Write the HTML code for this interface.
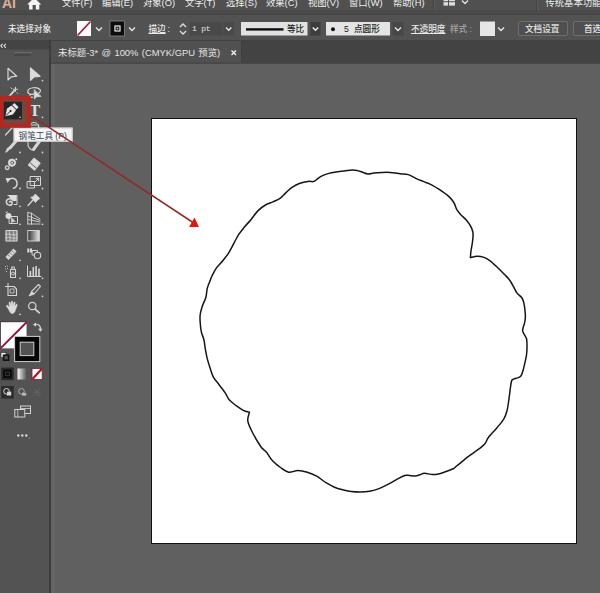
<!DOCTYPE html>
<html><head><meta charset="utf-8"><title>Illustrator</title>
<style>
html,body{margin:0;padding:0;background:#606060;}
body{width:600px;height:593px;overflow:hidden;position:relative;font-family:"Liberation Sans","Noto Sans CJK SC",sans-serif;color:#dcdcdc;}
.abs{position:absolute;}
#menubar{left:0;top:0;width:600px;height:15px;background:linear-gradient(#505050 0,#505050 10px,#4a4a4a 10px,#4a4a4a 14px,#434343 14px,#434343 15px);overflow:hidden;}
#menubar span{position:absolute;top:-4.1px;font-size:9.3px;line-height:14px;color:#efefef;white-space:nowrap;}
#ctrl{left:0;top:15px;width:600px;height:25px;background:#525252;border-bottom:1px solid #424242;}
#ctrltxt{left:0;top:14px;width:600px;height:26px;}
#ctrltxt .t{position:absolute;font-size:8.6px;line-height:12px;top:9px;color:#e8e8e8;white-space:nowrap;font-weight:500;}
#tabbar{left:0;top:41px;width:600px;height:22px;background:#434343;border-bottom:1px solid #494949;}
#tab{left:51px;top:41px;width:190px;height:22px;background:#515151;border-right:1px solid #3e3e3e;border-bottom:1px solid #4a4a4a;box-sizing:content-box;height:21px;}
#tab span{position:absolute;left:7px;top:4.7px;font-size:9.4px;word-spacing:0.8px;line-height:13px;color:#e4e4e4;white-space:nowrap;}
#canvas{left:51px;top:64px;width:549px;height:530px;background:#606060;}
#tools{left:0;top:41px;width:49px;height:552px;background:#535353;}
#toolsedge{left:49px;top:41px;width:2px;height:552px;background:#3c3c3c;}
#strip{left:51px;top:64px;width:4px;height:529px;background:#656565;}
#toolshead{left:0;top:41px;width:49px;height:8px;background:#444444;border-bottom:1px solid #4b4b4b;}
#art{left:151px;top:118px;width:424px;height:424px;background:#fff;border:1px solid #111;}
#ttool{left:29.3px;top:102px;font-family:"Liberation Serif",serif;font-weight:bold;font-size:16.5px;line-height:18px;color:#dedede;}
#tip{left:13px;top:127px;transform:translate(0.6px,0.6px);width:59px;height:14px;background:#f6f6f6;border:1px solid #cfcfcf;box-sizing:border-box;}
#tip span{position:absolute;left:4px;top:1.5px;font-size:8.6px;line-height:11px;color:#3b4658;white-space:nowrap;}
</style></head><body>
<div class="abs" id="menubar">
<span style="left:2px;font-weight:bold;font-size:14px;color:#dcb09a;top:-4.3px;font-family:'Liberation Sans',sans-serif;letter-spacing:0">AI</span>
<span style="left:62px">文件(F)</span><span style="left:102px">编辑(E)</span><span style="left:143px">对象(O)</span><span style="left:185px">文字(T)</span><span style="left:226px">选择(S)</span><span style="left:266px">效果(C)</span><span style="left:308px">视图(V)</span><span style="left:349px">窗口(W)</span><span style="left:393px">帮助(H)</span>
<span style="left:545.5px;top:-4.2px">传统基本功能</span>
</div>
<div class="abs" id="ctrl"></div>
<div class="abs" id="tabbar"></div>
<div class="abs" id="tab"><span>未标题-3* @ 100% (CMYK/GPU 预览)</span></div>
<div class="abs" id="canvas"></div>
<div class="abs" id="tools"></div>
<div class="abs" id="toolshead"></div>
<div class="abs" id="toolsedge"></div>
<div class="abs" id="strip"></div>
<div class="abs" id="art"></div>
<svg class="abs" id="ov" style="left:0;top:0" width="600" height="593" viewBox="0 0 600 593">
<path d="M280.0 198.4C282.2 196.8 284.0 194.4 286.0 192.6C288.0 190.8 289.7 188.9 292.0 187.4C294.3 185.9 297.3 184.3 300.0 183.3C302.7 182.3 305.8 181.7 308.0 181.4C310.2 181.1 311.7 181.8 313.0 181.6C314.3 181.4 314.7 180.9 316.0 180.0C317.3 179.1 319.0 177.5 321.0 176.4C323.0 175.3 325.5 174.3 328.0 173.6C330.5 172.9 333.3 172.4 336.0 172.0C338.7 171.6 341.3 171.3 344.0 171.0C346.7 170.7 349.8 170.1 352.0 170.0C354.2 169.9 355.3 170.1 357.0 170.4C358.7 170.7 360.2 171.4 362.0 172.0C363.8 172.6 366.0 173.8 368.0 174.0C370.0 174.2 371.7 173.3 374.0 173.0C376.3 172.7 379.3 172.5 382.0 172.4C384.7 172.3 387.0 172.2 390.0 172.4C393.0 172.6 397.0 173.3 400.0 173.7C403.0 174.1 405.5 173.8 408.2 174.6C410.9 175.4 413.6 177.4 416.3 178.6C419.0 179.8 421.7 180.8 424.4 181.9C427.1 183.0 429.8 183.9 432.5 185.3C435.2 186.7 437.9 188.6 440.6 190.4C443.3 192.2 446.5 194.4 448.7 196.4C450.9 198.4 452.4 200.3 453.8 202.5C455.2 204.7 455.6 207.6 456.8 209.6C458.0 211.6 459.1 212.8 460.8 214.7C462.5 216.5 465.2 218.7 466.9 220.7C468.6 222.7 470.0 224.8 471.0 226.8C472.0 228.8 472.7 230.5 473.0 232.9C473.3 235.3 472.9 238.0 472.6 241.0C472.3 244.0 471.4 248.2 471.0 251.0C470.6 253.8 470.5 256.5 470.4 257.6C471.5 257.4 474.9 256.3 477.0 256.2C479.1 256.1 481.2 256.4 483.3 257.1C485.4 257.8 487.1 258.7 489.4 260.3C491.7 261.9 494.6 264.7 497.0 267.0C499.4 269.3 501.9 271.8 504.0 274.0C506.1 276.2 508.0 277.8 509.6 280.0C511.2 282.2 512.7 285.2 513.9 287.4C515.1 289.5 515.5 291.1 516.9 292.9C518.2 294.7 520.8 296.2 522.0 298.0C523.2 299.8 523.5 301.5 524.0 303.6C524.5 305.7 524.8 308.5 525.0 310.7C525.2 312.9 525.5 314.8 525.4 316.8C525.3 318.8 525.1 320.7 524.6 322.9C524.1 325.1 522.7 328.1 522.6 330.0C522.5 331.9 523.3 332.5 524.0 334.0C524.7 335.5 526.1 336.8 526.6 339.0C527.1 341.2 527.0 344.5 527.0 347.2C527.0 349.9 526.8 352.9 526.5 355.0C526.2 357.1 526.1 357.6 525.5 360.1C524.9 362.6 523.9 367.5 523.1 370.2C522.3 372.9 521.9 374.9 520.7 376.3C519.5 377.7 517.5 377.7 516.0 378.3C514.5 378.9 512.9 378.6 512.0 380.0C511.1 381.4 511.1 383.3 510.6 386.4C510.1 389.5 509.6 394.6 509.0 398.6C508.4 402.7 507.9 407.3 507.0 410.7C506.1 414.1 505.6 415.9 503.9 418.8C502.2 421.7 499.3 424.9 496.8 427.9C494.3 430.9 490.7 434.3 488.7 437.0C486.7 439.7 486.4 442.1 484.7 444.1C483.0 446.1 481.3 447.2 478.6 449.2C475.9 451.2 471.1 454.4 468.5 456.3C465.9 458.2 464.9 459.3 463.0 460.8C461.1 462.3 458.8 464.2 457.2 465.5C455.6 466.8 455.4 467.5 453.7 468.5C451.9 469.5 449.0 470.4 446.7 471.3C444.4 472.2 442.0 473.1 439.7 473.7C437.4 474.2 435.2 474.7 432.7 474.6C430.2 474.5 426.6 473.2 424.5 473.2C422.4 473.2 421.4 474.3 419.8 474.8C418.2 475.3 416.9 475.9 415.2 476.0C413.4 476.1 411.1 475.6 409.3 475.5C407.6 475.4 406.6 474.9 404.7 475.5C402.8 476.1 400.4 477.4 397.7 478.8C395.0 480.2 391.4 482.6 388.3 484.2C385.2 485.8 382.1 487.4 379.0 488.6C375.9 489.8 372.8 490.6 369.7 491.2C366.6 491.8 363.4 491.9 360.3 491.9C357.2 491.9 354.1 491.8 351.0 491.4C347.9 491.0 344.4 490.2 341.7 489.5C338.9 488.8 337.1 488.3 334.5 487.2C331.9 486.1 329.0 484.5 326.0 482.7C323.0 480.9 319.8 477.9 316.7 476.1C313.6 474.4 310.4 473.1 307.3 472.2C304.2 471.3 301.1 470.5 298.0 470.5C294.9 470.5 291.6 472.7 288.7 472.2C285.8 471.7 283.2 469.4 280.5 467.5C277.8 465.6 274.6 463.0 272.3 460.5C270.0 458.0 268.4 454.6 266.5 452.3C264.6 450.0 263.0 449.8 260.7 446.5C258.4 443.2 254.7 436.8 252.5 432.5C250.3 428.2 248.3 424.2 247.8 420.8C247.3 417.4 249.2 413.6 249.5 412.2C248.4 411.9 245.4 411.4 243.2 410.3C241.0 409.2 238.5 407.4 236.2 405.7C233.9 403.9 231.0 401.9 229.2 399.8C227.4 397.7 227.1 395.7 225.5 393.3C223.9 390.9 221.5 387.9 219.5 385.2C217.5 382.5 214.9 379.8 213.4 377.1C211.9 374.4 211.4 372.0 210.4 369.0C209.4 366.0 208.2 362.3 207.3 358.9C206.5 355.5 205.9 352.0 205.3 348.8C204.7 345.6 204.6 342.6 203.9 339.7C203.2 336.8 201.9 334.5 201.3 331.6C200.7 328.7 200.4 325.4 200.2 322.5C200.0 319.6 199.8 317.1 200.2 314.4C200.5 311.7 201.4 309.2 202.3 306.3C203.2 303.4 205.1 300.2 205.9 297.2C206.7 294.2 206.6 291.0 207.3 288.1C208.1 285.2 209.7 281.9 210.4 280.0C211.1 278.1 210.7 278.5 211.7 276.5C212.7 274.5 214.5 270.7 216.3 268.1C218.2 265.5 220.8 263.2 222.8 260.7C224.8 258.2 226.5 256.2 228.4 253.3C230.3 250.4 232.3 246.2 234.0 243.1C235.7 240.0 236.9 237.3 238.6 234.7C240.3 232.1 242.2 229.8 244.2 227.3C246.2 224.8 248.4 222.7 250.7 219.9C253.0 217.1 255.6 213.1 258.1 210.6C260.6 208.1 263.0 206.4 265.5 205.0C268.0 203.6 270.5 203.0 272.9 201.9C275.3 200.8 277.8 200.0 280.0 198.4Z" fill="none" stroke="#161616" stroke-width="1.5" stroke-linejoin="round"/>
<!-- menu bar icons -->
<g id="mb">
<path d="M27.2 4.4 L34.2 -2.2 L41.2 4.4 L39.3 4.4 L39.3 9.4 L35.8 9.4 L35.8 5 L32.6 5 L32.6 9.4 L29.1 9.4 L29.1 4.4Z" fill="#f4f4f4"/>
<rect x="433" y="0" width="1" height="10" fill="#424242"/><rect x="434" y="0" width="1" height="10" fill="#5c5c5c"/>
<rect x="536" y="0" width="1" height="10" fill="#424242"/><rect x="537" y="0" width="1" height="10" fill="#5c5c5c"/>
<g fill="#dedede"><rect x="443.5" y="-1" width="4.5" height="2.2"/><rect x="449" y="-1" width="6" height="2.2"/><rect x="443.5" y="2.2" width="4.5" height="3.4"/><rect x="449" y="2.2" width="6" height="3.4"/></g>
<path d="M462 0.5 l3 3 l3 -3" fill="none" stroke="#e6e6e6" stroke-width="1.3"/>
</g>
<!-- control bar widgets -->
<g id="cb">
<rect x="77" y="21" width="14" height="15" fill="#fbfbfb"/>
<path d="M77.5 35.5 L90.5 21.5" stroke="#982035" stroke-width="1.7"/>
<path d="M96 27.5 l3 3 l3 -3" fill="none" stroke="#e6e6e6" stroke-width="1.4"/>
<rect x="110" y="21" width="14.5" height="15" fill="#0c0c0c" stroke="#8a8a8a" stroke-width="0.8"/>
<rect x="115" y="26" width="5" height="5" fill="none" stroke="#f0f0f0" stroke-width="1.2"/>
<rect x="116.6" y="27.6" width="1.8" height="1.8" fill="#bbb"/>
<path d="M129 27.5 l3 3 l3 -3" fill="none" stroke="#e6e6e6" stroke-width="1.4"/>
<path d="M180 27 l3 -3 l3 3 M180 31 l3 3 l3 -3" fill="none" stroke="#e0e0e0" stroke-width="1.3"/>
<rect x="189.5" y="22" width="33" height="13.5" fill="#494949"/>
<rect x="223.5" y="22" width="10.5" height="13.5" fill="#494949"/><path d="M226 27.5 l2.7 2.7 l2.7 -2.7" fill="none" stroke="#e6e6e6" stroke-width="1.4"/>
<rect x="241" y="22" width="66.5" height="13.5" fill="#e2e2e2"/>
<rect x="246" y="28.2" width="37.5" height="2.4" fill="#111"/>
<rect x="310.5" y="22" width="10" height="13.5" fill="#3d3d3d"/>
<path d="M312.8 27.5 l2.7 2.7 l2.7 -2.7" fill="none" stroke="#f0f0f0" stroke-width="1.4"/>
<rect x="326" y="22" width="64" height="13.5" fill="#e4e4e4"/>
<circle cx="333" cy="29.3" r="2" fill="#111"/>
<rect x="392.5" y="22" width="11" height="13.5" fill="#474747"/><path d="M395 27.5 l3 3 l3 -3" fill="none" stroke="#e6e6e6" stroke-width="1.4"/>
<rect x="480" y="21.5" width="15" height="14.5" fill="#e6e6e6"/>
<path d="M498 27.5 l3 3 l3 -3" fill="none" stroke="#e6e6e6" stroke-width="1.4"/>
<rect x="518.5" y="21.5" width="49" height="14" rx="1.5" fill="#4f4f4f" stroke="#6e6e6e" stroke-width="1"/>
<rect x="573.5" y="21.5" width="40" height="14" rx="1.5" fill="#4f4f4f" stroke="#6e6e6e" stroke-width="1"/>
</g>
<!-- tab close -->
<path d="M231.5 50.5 l4.5 4.5 M236 50.5 l-4.5 4.5" stroke="#f0f0f0" stroke-width="1.4"/>
<!-- toolbar header -->
<path d="M2.6 43.8 l-1.8 2 l1.8 2 M5.8 43.8 l-1.8 2 l1.8 2" fill="none" stroke="#e0e0e0" stroke-width="1.1"/>
<rect x="14.5" y="52" width="17.5" height="1" fill="#686868"/><rect x="14" y="54.5" width="17" height="1" fill="#3c3c3c"/>
<!-- tool icons -->
<g id="tl" fill="none" stroke="#d6d6d6" stroke-width="1.2" stroke-linejoin="round" stroke-linecap="round">
<!-- row1 -->
<path d="M8 68.3 L8 80 L11.3 76.8 L16.8 76.2 Z"/>
<path d="M30.5 68 L30.5 80.3 L34 77 L40 76.3 Z" fill="#dcdcdc"/>
<!-- row2 wand -->
<g transform="translate(0 0.8)"><path d="M7.5 97.5 L14 90" stroke-width="1.8"/>
<path d="M15.5 86.5 v4 M13.5 88.5 h4 M11 87 l1 1 M17 92 l0.6 0.6" stroke-width="1"/></g>
<!-- lasso -->
<path d="M35.5 93.5 C30 95.5 27 93.5 28 90.5 C29 87.5 37 86.5 40 89.5 C41 91 40 92.5 38.5 93.3 M30.5 94.5 C29 96 30.5 98 32.5 97.2"/>
<path d="M34.3 90 L34.3 99 L36.6 96.8 L40.6 96.4 Z" fill="#dcdcdc" stroke-width="0.8"/>
<!-- T -->
<!-- row4 line + rect (mostly hidden) -->
<path d="M5.5 135 L17 122.5"/>
<path d="M29 127 a5 4.5 0 0 1 10 0 M27.5 125 h11 v10 h-11z" stroke-width="1"/>
<!-- row5 brush -->
<path d="M16.5 140.5 L10 148" stroke-width="3"/>
<path d="M9.5 148.5 C8.5 151 7 152 5.5 152.2 C7 150.5 6.5 148.5 8.2 147.4 Z" fill="#dcdcdc" stroke-width="0.8"/>
<!-- pencil/shaper -->
<path d="M40 140.5 L33.5 149.5" stroke-width="3"/>
<path d="M28 142 C27.5 146 29.5 149 32 150" stroke-width="1.1"/>
<!-- row6 blob brush-ish -->
<circle cx="12" cy="162.7" r="3.6" fill="#dcdcdc" stroke-width="1"/>
<circle cx="12.2" cy="162.7" r="1.5" fill="none" stroke="#535353" stroke-width="0.9"/>
<circle cx="7.2" cy="167.7" r="1.8" stroke-width="1.3"/>
<circle cx="16.3" cy="159.3" r="1" fill="#dcdcdc" stroke="none"/>
<!-- eraser -->
<path d="M34 158.3 L40 163.3 L34.5 170 L28.5 165 Z" fill="#dcdcdc"/>
<path d="M30.3 163 L36.2 168" stroke="#535353" stroke-width="0.9"/>
<!-- row7 rotate -->
<path d="M8 180.5 C11 176.5 17 178 17 183.5 C17 186 15.5 187.6 13.5 188.2" stroke-width="1.5"/>
<path d="M5.5 178 L10.5 178.2 L7.6 183 Z" fill="#dcdcdc" stroke="none"/>
<!-- scale -->
<rect x="27.5" y="181.5" width="7" height="6.5" stroke-width="1"/>
<rect x="30.5" y="176.5" width="10" height="9" stroke-width="1"/>
<path d="M34 183 L38.5 178.5 M36 178.3 h2.7 v2.7" stroke-width="1"/>
<!-- row8 width/warp -->
<path d="M8 195.5 h9 v9 h-3" stroke-width="1"/>
<path d="M8.5 196 h8 v5 h-4z" fill="#dcdcdc" stroke="none"/>
<path d="M11.5 199 C8 198 5.5 200.5 6.5 203 C7.5 206 11.5 206 12.2 203.2 C12.5 201.5 10.5 200.8 9.6 202" stroke-width="1.6"/>
<!-- pin -->
<path d="M28 205.5 L32.5 200.5" stroke-width="1.3"/>
<path d="M31 197.5 L35.5 202.5 L37 200.5 L39.8 198.5 L35.3 194 L33.3 196.6 Z" fill="#dcdcdc" stroke-width="0.8"/>
<!-- row9 shape builder -->
<rect x="9.5" y="216.5" width="8" height="7" stroke-width="1"/>
<circle cx="8.5" cy="216" r="3" fill="#dcdcdc" stroke="none"/>
<path d="M11.5 218 L11.5 223 L13 221.6 L15 221.4Z" fill="#dcdcdc" stroke-width="0.6"/>
<path d="M6 212.5 l1.5 -0.5" stroke-width="1"/>
<!-- perspective grid -->
<path d="M27.8 212.5 V224 M31.5 213.3 V224 M27.8 212.5 L31.5 213.3 M27.8 216 L40 220.5 M27.8 219.5 L40 222 M27.8 224 H40 M31.5 213.3 L40 219 M31.5 216.5 V224" stroke-width="0.9"/>
<!-- row10 mesh -->
<rect x="6" y="230.5" width="11" height="10.5" stroke-width="1.2" fill="#808080"/>
<path d="M6 234.5 C9 232.5 13 237 17 234 M6 238 C10 236 13 240 17 237.5 M9.5 230.5 C8.5 234 11.5 237 9.5 241 M13.5 230.5 C12.5 234 15.5 237 13.5 241" stroke-width="0.8"/>
<!-- eyedropper/measure (row 11) -->
<path d="M7 258.5 L15 250" stroke-width="4.2" stroke-linecap="butt"/>
<path d="M8.3 255 l1.4 1.4 M10.3 253 l1.4 1.4 M12.3 251 l1.4 1.4" stroke="#535353" stroke-width="0.8"/>
<!-- blend -->
<rect x="27.3" y="248.5" width="2" height="4" fill="#dcdcdc" stroke="none"/>
<rect x="30" y="248.5" width="2" height="4" fill="#dcdcdc" stroke="none"/>
<rect x="32.5" y="250.5" width="5" height="4.5" stroke-width="1"/>
<circle cx="37.5" cy="255.5" r="3.2" fill="#535353" stroke-width="1.1"/>
<!-- row 12 sprayer -->
<path d="M10.5 269.5 h5 v8 h-5z M11.8 269.5 v-2.5 h2.4 v2.5" stroke-width="1.1"/>
<circle cx="13" cy="273.5" r="1.5" stroke-width="1"/>
<path d="M5.5 266.5 v0.1 M7.5 266 v0.1 M5.5 269 v0.1 M7.5 268.5 v0.1 M6.5 271.5 v0.1" stroke-width="1"/>
<!-- graph -->
<path d="M27.5 266 V276.5 H41" stroke-width="1"/>
<path d="M30.4 271 V276 M33.3 267 V276 M36.1 266 V276 M39 268.6 V276" stroke-width="1.6" stroke-linecap="butt"/>
<!-- row 13 artboard -->
<path d="M8 283.5 V295.5 H16.5 V289 L14 286.5 H5.5 M8 286.5 V295.5" stroke-width="1.1"/>
<path d="M10.5 289 h3.5 v4 h-3.5z" stroke-width="0.8"/>
<!-- slice -->
<path d="M38.5 284.5 L40.5 286.5 L34 294 L31.5 291.5 Z" stroke-width="1.1"/>
<path d="M31.5 291.7 L29 296 L33.8 294.2" fill="#dcdcdc" stroke-width="0.8"/>
<!-- row 14 hand -->
<path d="M8.5 309 L6.5 306.5 C6 305.5 7.3 304.8 8 305.8 L9.3 307.3 L9 302.8 C9 301.8 10.4 301.8 10.5 302.8 L10.9 306 L11.3 301.8 C11.4 300.8 12.8 300.9 12.8 301.9 L12.8 306 L13.8 302.6 C14.1 301.7 15.4 302 15.2 303 L14.6 306.6 L16 304.6 C16.5 303.8 17.6 304.5 17.2 305.4 L15.5 310 C15 312 14 313.5 12 313.5 C10.5 313.5 9.5 311.5 8.5 309Z" fill="#dcdcdc" stroke-width="0.5"/>
<!-- zoom -->
<circle cx="32.3" cy="306" r="3.7" stroke-width="1.2"/>
<path d="M35.1 309 L39.3 312.8" stroke-width="1.7"/>
</g>
<!-- gradient tool -->
<defs>
<linearGradient id="g1" x1="0" x2="1" y1="0" y2="0"><stop offset="0" stop-color="#333"/><stop offset="1" stop-color="#e8e8e8"/></linearGradient>
<linearGradient id="g2" x1="0" x2="1" y1="0" y2="0"><stop offset="0" stop-color="#fafafa"/><stop offset="1" stop-color="#555"/></linearGradient>
</defs>
<rect x="27.8" y="230.5" width="11.5" height="10.5" fill="url(#g1)" stroke="#d0d0d0" stroke-width="1"/>
<!-- flyout dots -->
<g fill="#d0d0d0">
<circle cx="42.5" cy="80.6" r="0.9"/>
<circle cx="42.5" cy="117.3" r="0.9"/>
<circle cx="20" cy="152.5" r="0.9"/><circle cx="42.5" cy="152.5" r="0.9"/>
<circle cx="42.5" cy="170.5" r="0.9"/>
<circle cx="20" cy="188.5" r="0.9"/><circle cx="42.5" cy="188.5" r="0.9"/>
<circle cx="20" cy="206.3" r="0.9"/><circle cx="42.5" cy="206.3" r="0.9"/>
<circle cx="20" cy="224.3" r="0.9"/><circle cx="42.5" cy="224.3" r="0.9"/>
<circle cx="20" cy="260.3" r="0.9"/>
<circle cx="20" cy="278.3" r="0.9"/><circle cx="42.5" cy="278.3" r="0.9"/>
<circle cx="42.5" cy="296.3" r="0.9"/>
<circle cx="20" cy="314.3" r="0.9"/>
</g>
<!-- selected pen tool -->
<rect x="3" y="99.5" width="24.5" height="24.5" fill="#77453f"/>
<rect x="3.5" y="101.7" width="18.5" height="17.6" fill="#262626"/>
<g transform="translate(11.2 110.3) rotate(45) scale(1.15)">
<path d="M-2.6 -6.5 h5.2 v2.6 h-5.2z" fill="#e6e6e6"/>
<path d="M-2.8 -3.2 h5.6 L3.6 1.5 L0 7.2 L-3.6 1.5 Z" fill="#e6e6e6"/>
<path d="M0 6.5 V1.5" stroke="#262626" stroke-width="0.8"/>
<circle cx="0" cy="0.8" r="0.9" fill="#262626"/>
</g>
<circle cx="20" cy="117.2" r="0.8" fill="#e0e0e0"/>
<!-- fill/stroke -->
<rect x="0" y="321.2" width="27" height="27.3" fill="#4a3c3c"/><rect x="0.9" y="322.2" width="25.7" height="26.2" fill="#fdfdfd"/>
<path d="M0.5 348.3 L26.8 322" stroke="#861c3a" stroke-width="1.9"/>
<rect x="14.6" y="336.4" width="25.2" height="25.2" fill="#060606" stroke="#cfcfcf" stroke-width="1"/>
<rect x="20.2" y="342.2" width="13.6" height="13.4" fill="#535353" stroke="#cfcfcf" stroke-width="1"/>
<path d="M34.5 324.5 C38.5 323.5 41 326 40.3 329.5" fill="none" stroke="#d6d6d6" stroke-width="1.2"/>
<path d="M33 324.6 l3 -2.2 v4.4z M40.4 331.8 l-2.3 -3 h4.6z" fill="#d6d6d6"/>
<rect x="1" y="352.5" width="5" height="5" fill="#f4f4f4" stroke="#222" stroke-width="0.6"/>
<rect x="3.6" y="355.2" width="5" height="5" fill="#535353" stroke="#111" stroke-width="1.6"/>
<!-- color mode -->
<rect x="1.2" y="367.6" width="12.6" height="12.6" fill="#2a2a2a"/>
<rect x="3.2" y="369.6" width="8.6" height="8.6" fill="#0a0a0a"/>
<rect x="5.7" y="372.1" width="3.6" height="3.6" fill="none" stroke="#444" stroke-width="0.8"/>
<rect x="17.5" y="368.5" width="9" height="11" fill="url(#g2)"/>
<rect x="32" y="368.5" width="10.2" height="11" fill="#fafafa"/>
<path d="M32.5 379 L41.7 369" stroke="#a01c28" stroke-width="2.2"/>
<rect x="32" y="368.5" width="10.2" height="11" fill="none" stroke="#7a2030" stroke-width="0.8"/>
<!-- draw modes -->
<rect x="1.2" y="386" width="12.6" height="12.6" fill="#2c2c2c"/>
<circle cx="6.5" cy="391.3" r="2.8" fill="none" stroke="#d8d8d8" stroke-width="1"/>
<rect x="7" y="391.7" width="4.2" height="3.8" fill="#d8d8d8"/>
<circle cx="21.5" cy="391.3" r="2.8" fill="none" stroke="#a8a8a8" stroke-width="1"/>
<rect x="22" y="392.8" width="4.2" height="2.8" fill="#b8b8b8"/>
<rect x="34" y="389" width="6" height="6" fill="none" stroke="#6a6a6a" stroke-width="0.8" stroke-dasharray="1.2 1"/>
<circle cx="37" cy="392" r="1.6" fill="#666"/>
<!-- screen mode -->
<rect x="20.5" y="406" width="10" height="7.5" fill="#535353" stroke="#d4d4d4" stroke-width="1"/>
<path d="M20.5 408.5 h10" stroke="#d4d4d4" stroke-width="0.8"/>
<rect x="14.8" y="409.5" width="10" height="7.5" fill="#535353" stroke="#d4d4d4" stroke-width="1"/>
<path d="M17.8 409.5 v7.5" stroke="#d4d4d4" stroke-width="0.8"/>
<!-- more -->
<circle cx="18.3" cy="435.5" r="1.2" fill="#d8d8d8"/><circle cx="22.3" cy="435.5" r="1.2" fill="#d8d8d8"/><circle cx="26.3" cy="435.5" r="1.2" fill="#d8d8d8"/>
<circle cx="29.3" cy="438" r="0.6" fill="#bbb"/>
<!--OVERLAY_END-->
</svg>
<div class="abs" id="ctrltxt">
<span class="t" style="left:8px">未选择对象</span>
<span class="t" style="left:148.5px;text-decoration:underline">描边</span><span class="t" style="left:167.5px">:</span>
<span class="t" style="left:287px;color:#222;z-index:2">等比</span>
<span class="t" style="left:344px;color:#222;z-index:2">5</span>
<span class="t" style="left:354px;color:#222;z-index:2">点圆形</span>
<span class="t" style="left:411px;text-decoration:underline">不透明度</span>
<span class="t" style="left:450px;color:#a8a8a8">样式 :</span>
<span class="t" style="left:525px">文档设置</span>
<span class="t" style="left:584px">首选</span>
<span class="t" style="left:192px;font-family:'Liberation Mono',monospace;font-size:8px;letter-spacing:-0.2px;color:#e8e8e8">1 pt</span>
</div>
<div class="abs" id="ttool">T</div>
<div class="abs" id="tip"><span>钢笔工具 (P)</span></div>
<svg class="abs" style="left:0;top:0" width="600" height="593" viewBox="0 0 600 593">
<!-- red annotations -->
<rect x="1.5" y="97.7" width="27.3" height="28.1" fill="none" stroke="#b3271f" stroke-width="4"/>
<path d="M30 114.8 L193 222.5" stroke="#922b28" stroke-width="1.5"/>
<path d="M194.5 217.5 L199 227 L189 227 Z" fill="#e01812"/>

</svg>
</body></html>
